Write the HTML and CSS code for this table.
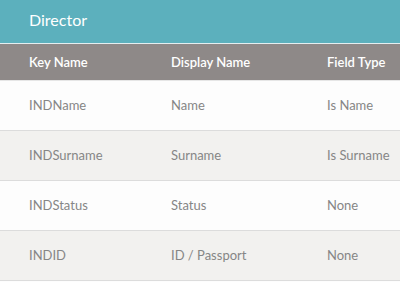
FILE: index.html
```html
<!DOCTYPE html>
<html lang="en">
<head>
  <meta charset="UTF-8" />
  <title>Director</title>
  <link rel="stylesheet" href="styles.css">
</head>
<body>
  <div class="panel">
    <div class="panel-title">Director</div>
    <table class="fields">
      <thead>
        <tr>
          <th class="col-key">Key Name</th>
          <th class="col-display">Display Name</th>
          <th class="col-type">Field Type</th>
        </tr>
      </thead>
      <tbody>
        <tr>
          <td>INDName</td>
          <td>Name</td>
          <td>Is Name</td>
        </tr>
        <tr>
          <td>INDSurname</td>
          <td>Surname</td>
          <td>Is Surname</td>
        </tr>
        <tr>
          <td>INDStatus</td>
          <td>Status</td>
          <td>None</td>
        </tr>
        <tr>
          <td>INDID</td>
          <td>ID / Passport</td>
          <td>None</td>
        </tr>
      </tbody>
    </table>
  </div>
</body>
</html>
```

FILE: styles.css
```css
:root {
  --teal: #5cb0bd;
  --head: #8e8988;
  --row-alt: #f2f1ef;
  --row: #fdfdfd;
  --line: #dcdcdc;
  --text: #868686;
}

* {
  box-sizing: border-box;
  margin: 0;
  padding: 0;
}

body {
  font-family: 'Lato', 'Open Sans', sans-serif;
  background: #fdfdfd;
  width: 400px;
  overflow: hidden;
}

.panel-title {
  background: var(--teal);
  color: #ffffff;
  font-size: 16px;
  height: 44px;
  line-height: 40px;
  padding-left: 29px;
  border-bottom: 1px solid #e4eef0;
}

.fields {
  width: 400px;
  border-collapse: collapse;
  table-layout: fixed;
}

.fields th {
  background: var(--head);
  color: #ffffff;
  font-weight: 600;
  font-size: 13px;
  text-align: left;
  height: 36px;
  border-bottom: 1px solid #e6e6e6;
}

.fields td {
  color: var(--text);
  font-size: 13px;
  height: 50px;
  border-bottom: 1px solid var(--line);
}

.col-key { width: 171px; }
.col-display { width: 156px; }

.fields th:first-child,
.fields td:first-child {
  padding-left: 29px;
}

.fields tbody tr:nth-child(odd) td { background: var(--row); }
.fields tbody tr:nth-child(even) td { background: var(--row-alt); }
```
